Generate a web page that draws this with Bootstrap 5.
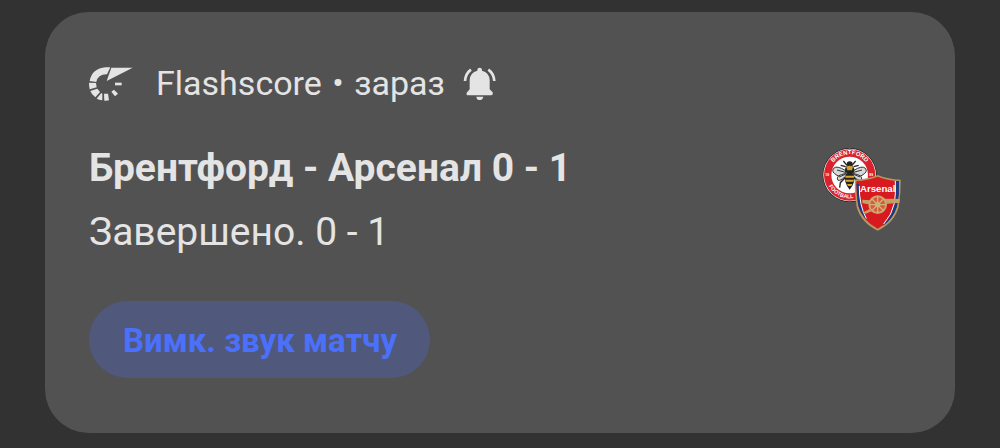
<!DOCTYPE html>
<html lang="uk">
<head>
<meta charset="utf-8">
<meta name="viewport" content="width=device-width, initial-scale=1">
<title>Flashscore</title>
<link href="https://cdn.jsdelivr.net/npm/bootstrap@5.3.0/dist/css/bootstrap.min.css" rel="stylesheet">
<style>
body { background: #323232; font-family: Roboto, sans-serif; color: #e4e4e4; }
.shade { padding: 12px 45px 14px; }
.notice { background: #525252; color: inherit; border: 0; border-radius: 44px; padding: 52px 44px 55px; }
.source { font-size: 34px; line-height: 38px; }
.source svg, .crests { flex: none; display: block; }
.app-name { margin-left: 22px; }
.dot { margin: 0 2px; }
.bell { margin-left: 18px; }
.match { margin-top: 42px; margin-bottom: 45px; padding-right: 9px; }
.headline, .result { font-size: 39px; line-height: 48px; }
.headline { font-weight: 700; }
.crests { margin-top: 4px; }
.mute { background: #50597c; color: #4b70fb; font-size: 33px; line-height: 40px; font-weight: 700; padding: 20px 33px 17px 34px; border: 0; }
.mute:hover { background: #5a648c; color: #4b70fb; }
.crest-text { font-family: "Liberation Sans", sans-serif; font-weight: 700; fill: #fff; }
</style>
</head>
<body>
<main class="shade">
<article class="card notice">
  <header class="source d-flex align-items-center">
    <svg width="45" height="35" viewBox="26 18 135 105" fill="#e4e4e4" aria-hidden="true">
      <path d="M28 63Q35 25 76 22H90L80 43Q53 42 48 66Z"/>
      <path d="M93 23H157L79 63Z"/>
      <path d="M26 68 47 69 49 82 28 88Q26 80 26 68Z"/>
      <path d="M30 93 51 86 59 96 45 112Q34 104 30 93Z"/>
      <path d="M63 99 66 101V121Q56 120 49 116Z"/>
      <path d="M71 101H83L86 121Q79 123 72 122Z"/>
      <path d="M93 95 101 89 113 101 104 109Z"/>
      <path d="M104 68H124V76H104Z"/>
    </svg>
    <span class="app-name">Flashscore</span><span class="dot">&nbsp;•&nbsp;</span><span>зараз</span>
    <svg class="bell" width="33" height="34" viewBox="36 18 99 102" fill="#e4e4e4" role="img" aria-label="Сповіщення">
      <path d="M79 32V30a7 7 0 0 1 14 0v2q22 6 23 28V88l9 9q2 9-5 9H52q-7 0-5-8l9-10V60q1-22 23-28ZM76 110H97Q95 120 86 120T76 110Z"/>
      <path d="M60 29Q44 40 42 63M112 29Q128 40 130 63" fill="none" stroke="#e4e4e4" stroke-width="8"/>
    </svg>
  </header>
  <div class="match d-flex justify-content-between align-items-start">
    <div>
      <h1 class="headline mb-3">Брентфорд - Арсенал 0 - 1</h1>
      <p class="result mb-0">Завершено. 0 - 1</p>
    </div>
    <svg class="crests" width="80" height="84" viewBox="21 24 240 252" role="img" aria-label="Брентфорд, Арсенал">
      <defs>
        <path id="ringTop" d="M43 104a61 61 0 0 1 122 0"/>
        <path id="ringBottom" d="M33 104a71 71 0 0 0 142 0"/>
      </defs>
      <circle cx="104" cy="105" r="81" fill="#222"/>
      <circle cx="104" cy="105" r="79" fill="#fff"/>
      <circle cx="104" cy="105" r="77" fill="#d9222c"/>
      <circle cx="104" cy="105" r="55" fill="#fff"/>
      <g class="crest-text">
        <text font-size="18"><textPath href="#ringTop" startOffset="50%" text-anchor="middle">BRENTFORD</textPath></text>
        <text font-size="16"><textPath href="#ringBottom" startOffset="16%">FOOTBALL</textPath></text>
        <text x="31" y="108" font-size="10">18</text>
        <text x="163" y="108" font-size="10">89</text>
      </g>
      <g fill="#d8d8d8" stroke="#333" stroke-width="3">
        <path d="M92 92Q65 75 56 85T66 106T92 99Z"/>
        <path d="M115 92Q142 75 151 85T141 106T115 99Z"/>
        <path d="M91 101Q65 105 67 117T92 109M116 101Q142 105 140 117T115 109"/>
        <path d="M66 90 91 97M141 90 116 97M72 111 91 103M135 111 116 103" fill="none"/>
      </g>
      <path d="M96 76 85 63M111 76 122 63M92 80 77 76M116 80 131 76M92 112 76 128 74 143M115 112 133 128" fill="none" stroke="#222" stroke-width="4"/>
      <ellipse cx="104" cy="72" rx="9" ry="8" fill="#222"/>
      <ellipse cx="104" cy="89" rx="14" ry="13" fill="#222"/>
      <path d="M94 80Q104 74 114 80L111 91H97Z" fill="#d4a22e"/>
      <path d="M92 101Q104 94 116 101Q124 124 104 149Q84 124 92 101Z" fill="#222"/>
      <path d="M91 107H117V113H91ZM91 119H117L115 125H93ZM96 132H112L109 138H99Z" fill="#dfa62d"/>
      <path d="M119 119Q157 118 188 105Q219 118 257 119Q258 160 251 201Q238 248 188 272Q138 248 125 201Q118 160 119 119Z" fill="#b69a63"/>
      <path d="M124 123Q157 122 188 110Q219 122 252 123Q253 162 246 199Q234 243 188 266Q142 243 130 199Q123 162 124 123Z" fill="#d81920"/>
      <path d="M243 123H252Q254 162 246 199Q236 235 205 257Q232 225 239 192Q244 160 243 123Z" fill="#153f86"/>
      <path d="M241 123Q243 160 238 190Q231 224 206 252" stroke="#fff" stroke-width="3" fill="none"/>
      <path d="M124 130 132 133Q130 190 156 240Q132 216 128 185Z" fill="#153f86"/>
      <path d="M133 138Q132 195 154 236" stroke="#fff" stroke-width="3" fill="none"/>
      <text class="crest-text" x="188" y="157" text-anchor="middle" font-size="29">Arsenal</text>
      <path d="M142 179 164 181 203 176 254 177V188L210 192 154 192 142 189Z" fill="#c5a064"/>
      <circle cx="188" cy="194" r="25" fill="#d45b3c" stroke="#c8a76e" stroke-width="6"/>
      <path d="M188 169V219M163 194H213M170 176 206 212M206 176 170 212" stroke="#d2b077" stroke-width="4"/>
      <circle cx="188" cy="194" r="8" fill="#d2b077"/>
      <path d="M166 206 145 217 148 223 172 213Z" fill="#c5a064"/>
    </svg>
  </div>
  <button type="button" class="btn rounded-pill mute align-self-start">Вимк. звук матчу</button>
</article>
</main>
<script src="https://cdn.jsdelivr.net/npm/bootstrap@5.3.0/dist/js/bootstrap.bundle.min.js"></script>
</body>
</html>
